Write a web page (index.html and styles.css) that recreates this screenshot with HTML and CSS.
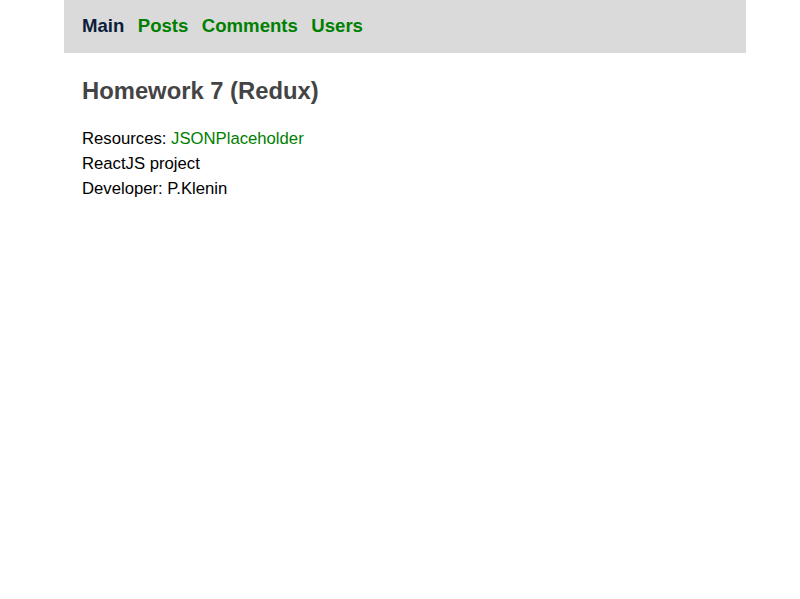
FILE: index.html
```html
<!DOCTYPE html>
<html>
<head>
<meta charset="utf-8">
<link rel="stylesheet" href="styles.css">
</head>
<body>
<div class="app">
  <nav class="nav">
    <a class="nav-link active" href="#">Main</a>
    <a class="nav-link" href="#">Posts</a>
    <a class="nav-link" href="#">Comments</a>
    <a class="nav-link" href="#">Users</a>
  </nav>
  <main class="content">
    <h1 class="title">Homework 7 (Redux)</h1>
    <p class="line">Resources: <a class="link" href="#">JSONPlaceholder</a></p>
    <p class="line">ReactJS project</p>
    <p class="line">Developer: P.Klenin</p>
  </main>
</div>
</body>
</html>
```
FILE: styles.css
```css
html, body {
  margin: 0;
  padding: 0;
  background: #fff;
  font-family: "Liberation Sans", Arial, sans-serif;
}
.app {
  width: 682px;
  margin-left: 64px;
}
.nav {
  background: #dadada;
  height: 53px;
  display: flex;
  align-items: center;
  gap: 13.4px;
  padding: 0 18px 2px;
  box-sizing: border-box;
}
.nav-link {
  font-size: 18.6px;
  font-weight: bold;
  color: #008000;
  text-decoration: none;
}
.nav-link.active {
  color: #0b1d3a;
}
.content {
  padding: 0 18px;
}
.title {
  margin: 24px 0 21px;
  font-size: 23.8px;
  font-weight: bold;
  color: #444;
  line-height: 28px;
}
.line {
  margin: 0;
  font-size: 16.7px;
  line-height: 25px;
  color: #000;
}
.link {
  color: #008000;
  text-decoration: none;
}
```
